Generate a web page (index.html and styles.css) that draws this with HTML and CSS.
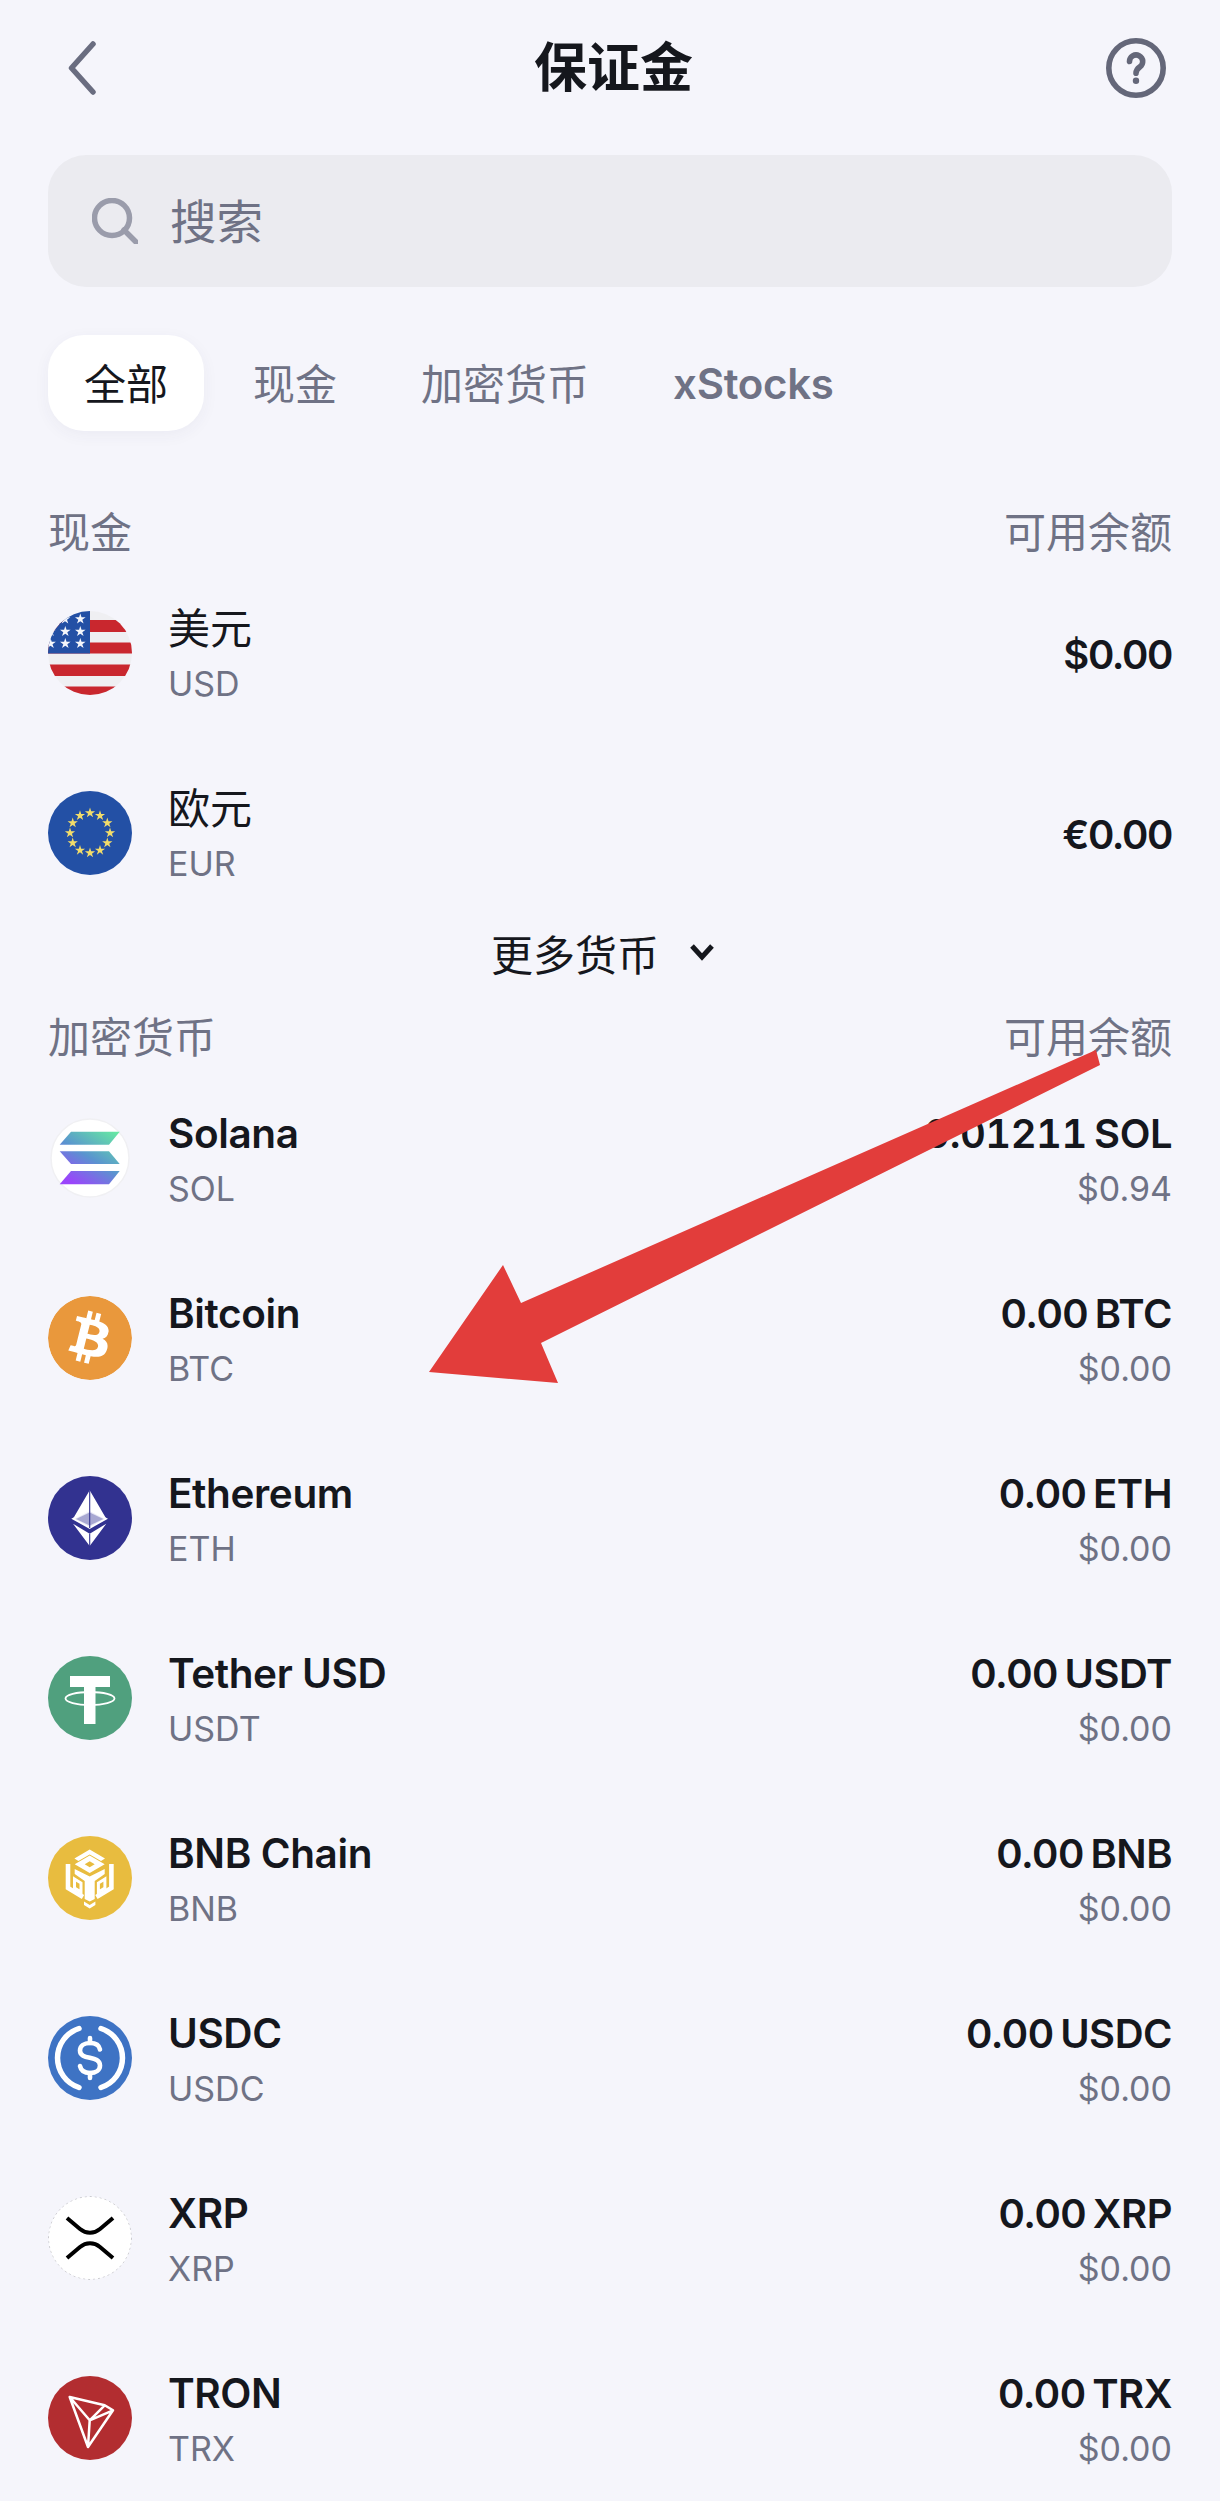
FILE: index.html
```html
<!DOCTYPE html>
<html lang="zh-CN">
<head>
    <meta charset="UTF-8">
    <meta name="viewport" content="width=device-width, initial-scale=1.0">
    <title>保证金</title>
    <link rel="stylesheet" href="styles.css">
</head>
<body>
    <div class="page">
        <header class="topbar">
            <svg class="back" viewBox="0 0 28 54"><path d="M25 3 L3.5 27 L25 51"/></svg>
            <h1>保证金</h1>
            <svg class="help" viewBox="0 0 60 60">
                <circle cx="30" cy="30" r="27.2"/>
                <path d="M23.5 23.5 a6.6 6.6 0 1 1 10.4 5.4 c-2.6 1.8 -3.9 3 -3.9 6.4"/>
                <circle class="dot" cx="30" cy="42.8" r="3.2"/>
            </svg>
        </header>

        <div class="search">
            <svg class="search-icon" viewBox="0 0 46 46"><circle cx="20" cy="20" r="17.5"/><path d="M32 32 L44 44"/></svg>
            <span>搜索</span>
        </div>

        <nav class="tabs">
            <a class="tab active">全部</a>
            <a class="tab">现金</a>
            <a class="tab">加密货币</a>
            <a class="tab latin">xStocks</a>
        </nav>

        <div class="section-head"><span>现金</span><span>可用余额</span></div>
        <div class="list">
            <div class="row">
                <svg class="coin" viewBox="0 0 84 84">
                    <defs><polygon id="star" points="0,-1 .22,-.31 .95,-.31 .36,.12 .59,.81 0,.38 -.59,.81 -.36,.12 -.95,-.31 -.22,-.31"/></defs>
                    <rect width="84" height="84" fill="#efeff2"/>
                    <rect y="9" width="84" height="12" fill="#c9272e"/>
                    <rect y="31.5" width="84" height="11" fill="#c9272e"/>
                    <rect y="53.5" width="84" height="11.5" fill="#c9272e"/>
                    <rect y="75.5" width="84" height="9" fill="#c9272e"/>
                    <rect width="42" height="42.5" fill="#2350a5"/>
                    <g fill="#f4f6fb">
                        <use href="#star" transform="translate(32.3 8) scale(5.6)"/>
                        <use href="#star" transform="translate(17 8) scale(5.6)"/>
                        <use href="#star" transform="translate(17.3 20.5) scale(5.6)"/>
                        <use href="#star" transform="translate(32.3 20.5) scale(5.6)"/>
                        <use href="#star" transform="translate(2.5 32.5) scale(5.6)"/>
                        <use href="#star" transform="translate(17.3 32.5) scale(5.6)"/>
                        <use href="#star" transform="translate(32.3 32.5) scale(5.6)"/>
                        <use href="#star" transform="translate(2.5 20.5) scale(5.6)"/>
                    </g>
                </svg>
                <div class="names"><div class="name cjk">美元</div><div class="sub">USD</div></div>
                <div class="amounts only"><div class="amount">$0.00</div></div>
            </div>
            <div class="row">
                <svg class="coin" viewBox="0 0 84 84">
                    <rect width="84" height="84" fill="#2350a5"/>
                    <g fill="#f2dc6a">
                        <use href="#star" transform="translate(42 22) scale(5.4)"/>
                        <use href="#star" transform="translate(52 24.7) scale(5.4)"/>
                        <use href="#star" transform="translate(59.3 32) scale(5.4)"/>
                        <use href="#star" transform="translate(62 42) scale(5.4)"/>
                        <use href="#star" transform="translate(59.3 52) scale(5.4)"/>
                        <use href="#star" transform="translate(52 59.3) scale(5.4)"/>
                        <use href="#star" transform="translate(42 62) scale(5.4)"/>
                        <use href="#star" transform="translate(32 59.3) scale(5.4)"/>
                        <use href="#star" transform="translate(24.7 52) scale(5.4)"/>
                        <use href="#star" transform="translate(22 42) scale(5.4)"/>
                        <use href="#star" transform="translate(24.7 32) scale(5.4)"/>
                        <use href="#star" transform="translate(32 24.7) scale(5.4)"/>
                    </g>
                </svg>
                <div class="names"><div class="name cjk">欧元</div><div class="sub">EUR</div></div>
                <div class="amounts only"><div class="amount">€0.00</div></div>
            </div>
        </div>

        <div class="more">
            <span>更多货币</span>
            <svg class="chevron" viewBox="0 0 26 18"><path d="M3 3 L13 14 L23 3"/></svg>
        </div>

        <div class="section-head second"><span>加密货币</span><span>可用余额</span></div>
        <div class="list">
            <div class="row">
                <svg class="coin" viewBox="0 0 84 84">
                    <defs>
                        <linearGradient id="sol" gradientUnits="userSpaceOnUse" x1="22" y1="72" x2="60" y2="10">
                            <stop offset="0.08" stop-color="#9a45fb"/>
                            <stop offset="0.5" stop-color="#5a94cf"/>
                            <stop offset="1" stop-color="#66eaa2"/>
                        </linearGradient>
                    </defs>
                    <circle cx="42" cy="42" r="39" fill="#fff" stroke="#f0f0f3" stroke-width="1.5"/>
                    <g fill="url(#sol)">
                        <polygon points="23,15.7 71.7,15.7 61,28.7 11.7,28.7"/>
                        <polygon points="11.7,35.3 61,35.3 71.7,48 23,48"/>
                        <polygon points="23,55 71.7,55 61,68.3 11.7,68.3"/>
                    </g>
                </svg>
                <div class="names"><div class="name">Solana</div><div class="sub">SOL</div></div>
                <div class="amounts"><div class="amount tabular">0.01211 SOL</div><div class="sub">$0.94</div></div>
            </div>
            <div class="row">
                <svg class="coin" viewBox="0 0 24 24">
                    <circle cx="12" cy="12" r="10" fill="#fff"/>
                    <path fill="#e9983c" d="M23.638 14.904c-1.602 6.43-8.113 10.34-14.542 8.736C2.67 22.05-1.244 15.525.362 9.105 1.962 2.67 8.475-1.243 14.9.358c6.43 1.605 10.342 8.115 8.738 14.548v-.002zm-6.35-4.613c.24-1.59-.974-2.45-2.64-3.03l.54-2.153-1.315-.33-.525 2.107c-.345-.087-.705-.167-1.064-.25l.526-2.127-1.32-.33-.54 2.165c-.285-.067-.565-.132-.84-.2l-1.815-.45-.35 1.407s.975.225.955.236c.535.136.63.486.615.766l-1.477 5.92c-.075.166-.24.406-.614.314.015.02-.96-.24-.96-.24l-.66 1.51 1.71.426.93.242-.54 2.19 1.32.327.54-2.17c.36.1.705.19 1.05.273l-.51 2.154 1.32.33.545-2.19c2.24.427 3.93.257 4.64-1.774.57-1.637-.03-2.58-1.217-3.196.854-.193 1.5-.76 1.68-1.93h.01zm-3.01 4.22c-.404 1.64-3.157.75-4.05.53l.72-2.9c.896.23 3.757.67 3.33 2.37zm.41-4.24c-.37 1.49-2.662.735-3.405.55l.654-2.64c.744.18 3.137.524 2.75 2.084v.006z"/>
                </svg>
                <div class="names"><div class="name">Bitcoin</div><div class="sub">BTC</div></div>
                <div class="amounts"><div class="amount">0.00 BTC</div><div class="sub">$0.00</div></div>
            </div>
            <div class="row">
                <svg class="coin" viewBox="0 0 84 84">
                    <rect width="84" height="84" fill="#323290"/>
                    <polygon fill="#fff" points="41.7,14.3 58.3,42.7 41.7,34.3 25,42.7"/>
                    <polygon fill="#e9e9f6" stroke="#fff" stroke-width="1.6" points="25,42.7 41.7,34.3 58.3,42.7 41.7,52"/>
                    <polygon fill="#fff" points="25,47.7 41.7,57.7 58.3,47.7 41.7,70"/>
                    <path d="M41.7 14.3 V52 M41.7 57.7 V70" fill="none" stroke="#323290" stroke-width="1.1"/>
                    <path d="M28 43 L41.7 36.5 L55.3 43 L41.7 49.5 Z" fill="#323290" opacity="0.35"/>
                </svg>
                <div class="names"><div class="name">Ethereum</div><div class="sub">ETH</div></div>
                <div class="amounts"><div class="amount">0.00 ETH</div><div class="sub">$0.00</div></div>
            </div>
            <div class="row">
                <svg class="coin" viewBox="0 0 84 84">
                    <rect width="84" height="84" fill="#50a07e"/>
                    <path fill="#fff" d="M22 20 H62 V31 H47.5 V68 H36 V31 H22 Z"/>
                    <ellipse cx="42" cy="42.5" rx="24.5" ry="6.5" fill="none" stroke="#fff" stroke-width="1.8"/>
                </svg>
                <div class="names"><div class="name">Tether USD</div><div class="sub">USDT</div></div>
                <div class="amounts"><div class="amount">0.00 USDT</div><div class="sub">$0.00</div></div>
            </div>
            <div class="row">
                <svg class="coin" viewBox="0 0 84 84">
                    <rect width="84" height="84" fill="#e8bc3f"/>
                    <g fill="#fff">
                        <polygon points="41.7,13.5 57,22.5 53,25 41.7,18.5 30.4,25 26.4,22.5"/>
                        <path fill-rule="evenodd" d="M41.7 19.5 L56.7 28.3 L41.7 37 L26.7 28.3 Z M41.7 25.3 L36.7 28.3 L41.7 31.3 L46.7 28.3 Z"/>
                        <polygon points="26.7,33 41.7,40.5 56.7,33 56.7,38 46.7,45 46.7,63 41.7,65.5 36.7,63 36.7,45 26.7,38"/>
                        <polygon points="36,65.5 41.7,69 47.4,65.5 47.4,69 41.7,72.5 36,69"/>
                    </g>
                    <g fill="none" stroke="#fff">
                        <path stroke-width="4.6" d="M20 28 V52 L35 61"/>
                        <path stroke-width="4.6" d="M63.4 28 V52 L48.4 61"/>
                        <path stroke-width="3" d="M26.5 43 L33 47 V56 L26.5 52 Z"/>
                        <path stroke-width="3" d="M56.9 43 L50.4 47 V56 L56.9 52 Z"/>
                    </g>
                </svg>
                <div class="names"><div class="name">BNB Chain</div><div class="sub">BNB</div></div>
                <div class="amounts"><div class="amount">0.00 BNB</div><div class="sub">$0.00</div></div>
            </div>
            <div class="row">
                <svg class="coin" viewBox="0 0 84 84">
                    <rect width="84" height="84" fill="#3e73c4"/>
                    <g fill="none" stroke="#fff" stroke-width="5.5" stroke-linecap="round">
                        <path d="M31 12.5 A31 31 0 0 0 31 71.5"/>
                        <path d="M53 12.5 A31 31 0 0 1 53 71.5"/>
                    </g>
                    <g fill="none" stroke="#fff" stroke-width="4.6" stroke-linecap="round">
                        <path d="M52 33.5 C51 28 46 27 42 27 C36 27 32 30 32 34.5 C32 45 52 38.5 52 49.5 C52 54 48 57 42 57 C37 57 33 55 32 50"/>
                        <path d="M42 22 V27 M42 57 V62"/>
                    </g>
                </svg>
                <div class="names"><div class="name">USDC</div><div class="sub">USDC</div></div>
                <div class="amounts"><div class="amount">0.00 USDC</div><div class="sub">$0.00</div></div>
            </div>
            <div class="row">
                <svg class="coin" viewBox="0 0 84 84">
                    <circle cx="42" cy="42" r="41.5" fill="#fff" stroke="#b9b9bd" stroke-width="0.8" stroke-dasharray="2 3"/>
                    <path d="M19 22 L32 33 C38 38 46 38 52 33 L65 22 M19 62 L32 51 C38 46 46 46 52 51 L65 62" fill="none" stroke="#000" stroke-width="4"/>
                </svg>
                <div class="names"><div class="name">XRP</div><div class="sub">XRP</div></div>
                <div class="amounts"><div class="amount">0.00 XRP</div><div class="sub">$0.00</div></div>
            </div>
            <div class="row">
                <svg class="coin" viewBox="0 0 84 84">
                    <rect width="84" height="84" fill="#b22d30"/>
                    <path d="M21.7 21 L56.7 29.3 L65 34.3 L40 71 Z M21.7 21 L41.7 44.3 L40 71 M41.7 44.3 L65 34.3 M41.7 44.3 L56.7 29.3" fill="none" stroke="#fff" stroke-width="2.5" stroke-linejoin="round"/>
                </svg>
                <div class="names"><div class="name">TRON</div><div class="sub">TRX</div></div>
                <div class="amounts"><div class="amount">0.00 TRX</div><div class="sub">$0.00</div></div>
            </div>
        </div>

        <!-- red annotation on top of the screenshot -->
        <svg class="arrow" viewBox="0 0 1220 2501">
            <polygon points="1096,1050 1100,1065 541,1343 558,1383 429,1372 503,1265 521,1303"/>
        </svg>
    </div>
</body>
</html>
```

FILE: styles.css
```css
* {
    box-sizing: border-box;
}
body {
    margin: 0;
    background: #f5f5fb;
    color: #15171d;
    font-family: Inter, "Noto Sans CJK SC", sans-serif;
}
.page {
    position: relative;
    height: 2501px;
    padding: 0 48px;
    overflow: hidden;
}
.topbar {
    display: grid;
    grid-template-columns: 1fr auto 1fr;
    align-items: center;
    height: 136px;
    padding: 0 6px 0 20px;
}
.topbar h1 {
    margin: 0 0 0 -7px;
    font-size: 53px;
    font-weight: 700;
    line-height: 60px;
}
.back {
    width: 28px;
    height: 54px;
    fill: none;
    stroke: #6a6d80;
    stroke-width: 5.5;
    stroke-linecap: round;
    stroke-linejoin: round;
}
.help {
    justify-self: end;
    width: 60px;
    height: 60px;
    fill: none;
    stroke: #646779;
    stroke-width: 5.6;
    stroke-linecap: round;
}
.help .dot {
    fill: #646779;
    stroke: none;
}
.search {
    display: flex;
    align-items: center;
    gap: 32px;
    height: 132px;
    margin-top: 19px;
    padding-left: 44px;
    border-radius: 38px;
    background: #ebebf0;
    color: #6f7285;
    font-size: 46.5px;
}
.search span {
    margin-top: -6px;
}
.search-icon {
    width: 46px;
    height: 46px;
    fill: none;
    stroke: #9a9cab;
    stroke-width: 5.5;
    stroke-linecap: round;
}
.tabs {
    display: flex;
    align-items: center;
    height: 96px;
    margin-top: 48px;
}
.tab {
    padding: 0 35px 3px 49px;
    color: #6f7285;
    font-size: 42px;
}
.tab.active {
    display: flex;
    align-items: center;
    height: 96px;
    padding: 0 36px 3px;
    border-radius: 36px;
    background: #fff;
    box-shadow: 0 4px 16px rgba(60, 60, 90, 0.05);
    color: #15171d;
}
.tab.latin {
    padding-bottom: 0;
    font-weight: 600;
    letter-spacing: -0.3px;
}
.section-head {
    display: flex;
    justify-content: space-between;
    margin-top: 77px;
    color: #6f7285;
    font-size: 42px;
    line-height: 50px;
}
.section-head.second {
    margin-top: 36px;
}
.list {
    display: flex;
    flex-direction: column;
    gap: 96px;
    margin-top: 53px;
}
.row {
    display: flex;
    align-items: center;
    justify-content: space-between;
    height: 84px;
}
.coin {
    display: block;
    flex: none;
    width: 84px;
    height: 84px;
    border-radius: 50%;
}
.names {
    flex: 1;
    margin-left: 36px;
}
.names, .amounts {
    display: flex;
    flex-direction: column;
    gap: 5px;
    margin-top: 6px;
}
.amounts {
    align-items: flex-end;
}
.amounts.only {
    margin-top: 2px;
}
.name, .amount {
    padding-top: 1px;
    font-size: 40.5px;
    font-weight: 560;
    line-height: 50px;
    letter-spacing: -0.4px;
    white-space: nowrap;
}
.amount {
    font-size: 40px;
    letter-spacing: -0.5px;
    word-spacing: -3px;
}
.amount.tabular {
    font-feature-settings: "tnum";
}
.only .amount {
    font-weight: 600;
    letter-spacing: -1.4px;
}
.name.cjk {
    font-size: 42px;
    font-weight: 400;
    letter-spacing: 0;
}
.sub {
    color: #6f7285;
    font-size: 34px;
    line-height: 50px;
    white-space: nowrap;
}
.more {
    display: flex;
    align-items: center;
    justify-content: center;
    gap: 30px;
    height: 50px;
    margin-top: 52px;
    padding-right: 14px;
    font-size: 42px;
}
.chevron {
    width: 26px;
    height: 18px;
    fill: none;
    stroke: #15171d;
    stroke-width: 5;
}
.arrow {
    position: absolute;
    top: 0;
    left: 0;
    width: 1220px;
    height: 2501px;
    fill: #e23d3b;
}
```
